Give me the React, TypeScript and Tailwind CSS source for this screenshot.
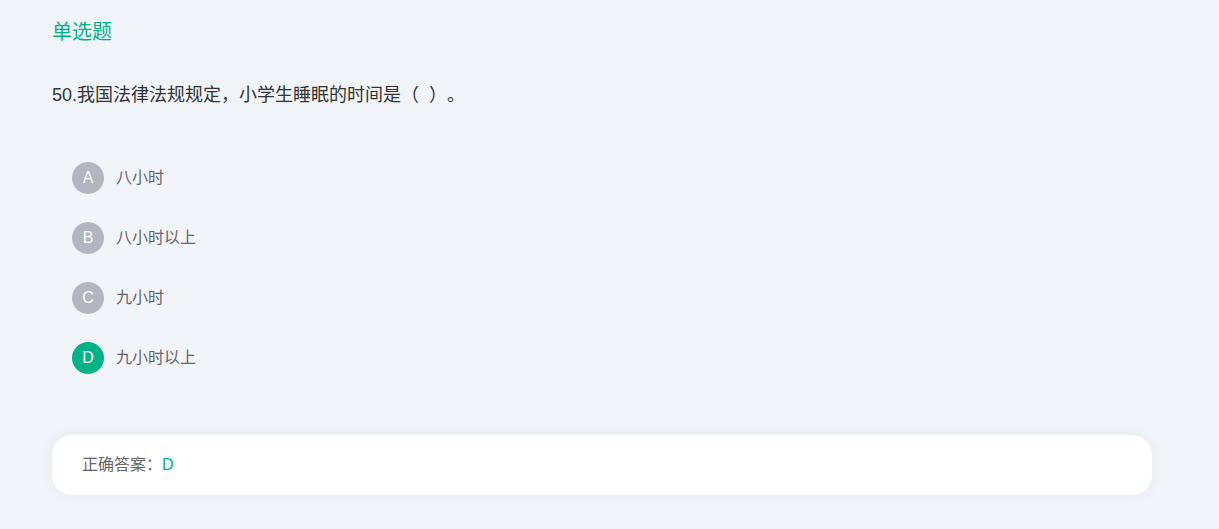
const OPTIONS = [
  { key: "A", text: "八小时", correct: false },
  { key: "B", text: "八小时以上", correct: false },
  { key: "C", text: "九小时", correct: false },
  { key: "D", text: "九小时以上", correct: true },
];

export default function App() {
  return (
    <div
      className="min-h-[529px] w-full bg-[#f1f4f8] pl-[52px] pr-[67px] pt-[20px] pb-[34px] [text-spacing-trim:space-all]"
      style={{ fontFamily: '"Liberation Sans", "Noto Sans CJK SC", sans-serif' }}
    >
      <div className="h-[24px] text-[20px] leading-[24px] text-[#00b386]">单选题</div>

      <div className="mt-[39px] h-[24px] text-[18px] leading-[24px] text-[#333333]">
        50.我国法律法规规定，小学生睡眠的时间是（&nbsp;&nbsp;）。
      </div>

      <div className="mt-[41px] flex flex-col">
        {OPTIONS.map((o) => (
          <div key={o.key} className="flex h-[60px] items-center gap-[12px] pl-[20px]">
            <span
              className={`flex h-[32px] w-[32px] items-center justify-center rounded-full text-[16px] text-white ${
                o.correct ? "bg-[#00b386]" : "bg-[#b1b6c1]"
              }`}
            >
              {o.key}
            </span>
            <span className="text-[16px] text-[#666666]">{o.text}</span>
          </div>
        ))}
      </div>

      <div className="mt-[47px] flex h-[60px] items-center rounded-[20px] bg-white pl-[30px] text-[16px] text-[#666666] shadow-[0_0_14px_rgba(0,0,0,0.05)]">
        正确答案：<span className="text-[#00b386]">D</span>
      </div>
    </div>
  );
}
